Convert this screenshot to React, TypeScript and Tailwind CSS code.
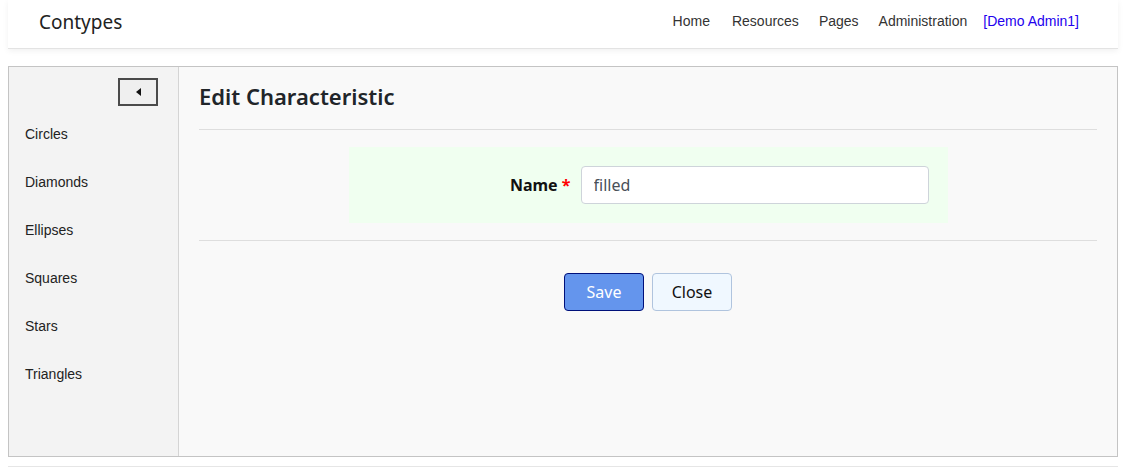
import { useState } from "react";

const SHAPES = ["Circles", "Diamonds", "Ellipses", "Squares", "Stars", "Triangles"];

export default function App() {
  const [name, setName] = useState("filled");

  return (
    <div className="min-h-[468px] bg-white pl-2 pr-3 font-['Noto_Sans',sans-serif]">
      {/* Header */}
      <header className="h-[49px] bg-white border-b border-[#e3e3e3] shadow-[0_2px_6px_rgba(0,0,0,0.06)] flex items-center justify-between pl-[31px] pr-[39px]">
        <span className="text-[19px] text-[#222] -mt-[4px]">Contypes</span>
        <nav className="flex items-center gap-[20px] font-['Liberation_Sans',Arial,sans-serif] text-[14px] text-[#333] -mt-[6px]">
          <a href="#" className="mr-[2px]">Home</a>
          <a href="#">Resources</a>
          <a href="#">Pages</a>
          <a href="#">Administration</a>
          <a href="#" className="text-[#2200ee] -ml-[4px]">[Demo Admin1]</a>
        </nav>
      </header>

      {/* Main */}
      <div className="mt-[17px] h-[391px] border border-[#c4c4c4] flex">
        <aside className="w-[170px] bg-[#f3f3f3] border-r border-[#d4d4d4] flex flex-col">
          <div className="flex justify-end pr-[20px] pt-[11px]">
            <button className="w-[40px] h-[28px] bg-[#efefef] border-2 border-[#4a4a4a] flex items-center justify-center">
              <svg width="5" height="8" viewBox="0 0 5 8">
                <path d="M5 0 L0 4 L5 8 Z" fill="#111" />
              </svg>
            </button>
          </div>
          <ul className="mt-[4px] pl-[16px] font-['Liberation_Sans',Arial,sans-serif] text-[14px] text-[#222]">
            {SHAPES.map(s => (
              <li key={s} className="h-[48px] flex items-center">
                <a href="#">{s}</a>
              </li>
            ))}
          </ul>
        </aside>

        <main className="flex-1 bg-[#f9f9f9] px-[20px]">
          <h1 className="h-[63px] pt-[13px] text-[22px] font-semibold text-[#212529] border-b border-[#dedede]">
            Edit Characteristic
          </h1>

          <div className="flex justify-center pt-[17px] pb-[17px] border-b border-[#dedede]">
            <div className="w-[599px] bg-[#f0fff0] flex items-center justify-end pt-[19px] pb-[19px] pr-[19px]">
              <label className="text-[16px] font-bold text-[#111] mr-[10px]">
                Name <span className="text-[#ff0000]">*</span>
              </label>
              <input
                value={name}
                onChange={e => setName(e.target.value)}
                className="w-[348px] h-[38px] bg-white border border-[#ced4da] rounded-[4px] px-[12px] text-[16px] text-[#495057] outline-none"
              />
            </div>
          </div>

          <div className="flex justify-center gap-[8px] pt-[32px]">
            <button className="w-[80px] h-[38px] bg-[#6495ed] border border-[#00107a] rounded-[4px] text-white text-[16px]">
              Save
            </button>
            <button className="w-[80px] h-[38px] bg-[#f0f8ff] border border-[#b0c4de] rounded-[4px] text-[#111] text-[16px]">
              Close
            </button>
          </div>
        </main>
      </div>

      <div className="mt-[9px] border-t border-[#e6e6e6]" />
    </div>
  );
}
